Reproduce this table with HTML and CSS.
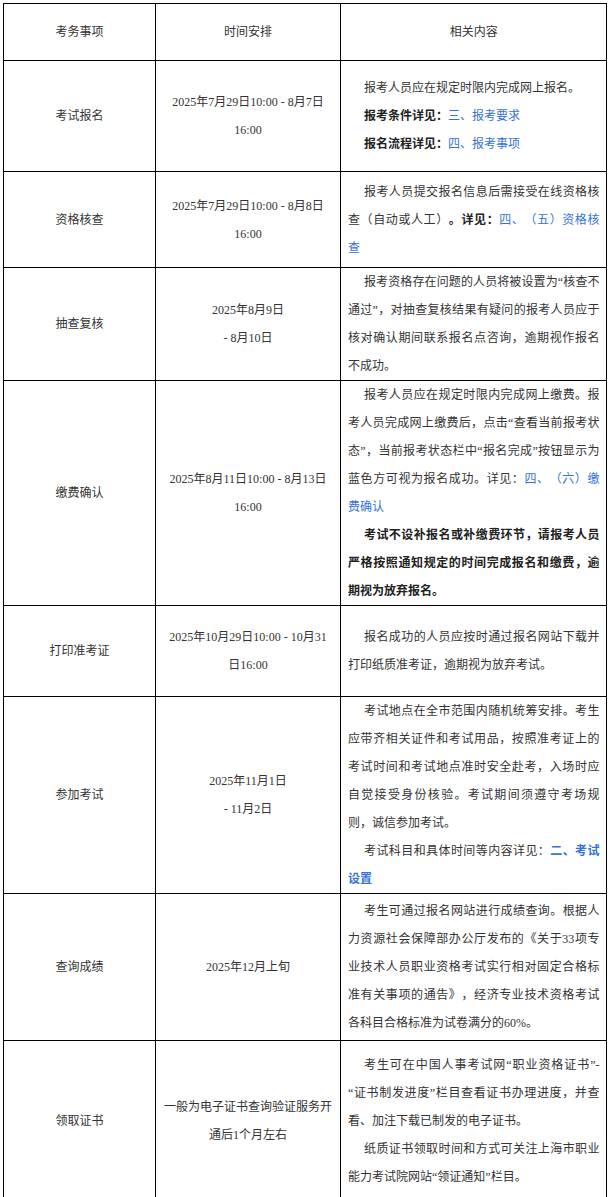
FILE: index.html
```html
<!DOCTYPE html>
<html lang="zh-CN">
<head>
<meta charset="utf-8">
<title>考务日程安排</title>
<link rel="stylesheet" href="styles.css">
</head>
<body>
<table class="schedule">
  <tbody>
    <tr class="row-head">
      <td class="item">考务事项</td>
      <td class="time">时间安排</td>
      <td class="desc desc-head">相关内容</td>
    </tr>
    <tr class="row-1">
      <td class="item">考试报名</td>
      <td class="time">2025年7月29日10:00 - 8月7日16:00</td>
      <td class="desc">
        <p>报考人员应在规定时限内完成网上报名。</p>
        <p><strong>报考条件详见：</strong><a class="link">三、报考要求</a></p>
        <p><strong>报名流程详见：</strong><a class="link">四、报考事项</a></p>
      </td>
    </tr>
    <tr class="row-2">
      <td class="item">资格核查</td>
      <td class="time">2025年7月29日10:00 - 8月8日16:00</td>
      <td class="desc">
        <p>报考人员提交报名信息后需接受在线资格核查（自动或人工）<strong>。详见：</strong><a class="link">四、（五）资格核查</a></p>
      </td>
    </tr>
    <tr class="row-3">
      <td class="item">抽查复核</td>
      <td class="time">2025年8月9日<br>- 8月10日</td>
      <td class="desc">
        <p>报考资格存在问题的人员将被设置为“核查不通过”，对抽查复核结果有疑问的报考人员应于核对确认期间联系报名点咨询，逾期视作报名不成功。</p>
      </td>
    </tr>
    <tr class="row-4">
      <td class="item">缴费确认</td>
      <td class="time">2025年8月11日10:00 - 8月13日16:00</td>
      <td class="desc">
        <p>报考人员应在规定时限内完成网上缴费。报考人员完成网上缴费后，点击“查看当前报考状态”，当前报考状态栏中“报名完成”按钮显示为蓝色方可视为报名成功。详见：<a class="link">四、（六）缴费确认</a></p>
        <p><strong>考试不设补报名或补缴费环节，请报考人员严格按照通知规定的时间完成报名和缴费，逾期视为放弃报名。</strong></p>
      </td>
    </tr>
    <tr class="row-5">
      <td class="item">打印准考证</td>
      <td class="time">2025年10月29日10:00 - 10月31日16:00</td>
      <td class="desc">
        <p>报名成功的人员应按时通过报名网站下载并打印纸质准考证，逾期视为放弃考试。</p>
      </td>
    </tr>
    <tr class="row-6">
      <td class="item">参加考试</td>
      <td class="time">2025年11月1日<br>- 11月2日</td>
      <td class="desc">
        <p>考试地点在全市范围内随机统筹安排。考生应带齐相关证件和考试用品，按照准考证上的考试时间和考试地点准时安全赴考，入场时应自觉接受身份核验。考试期间须遵守考场规则，诚信参加考试。</p>
        <p>考试科目和具体时间等内容详见：<a class="link link-bold">二、考试设置</a></p>
      </td>
    </tr>
    <tr class="row-7">
      <td class="item">查询成绩</td>
      <td class="time">2025年12月上旬</td>
      <td class="desc">
        <p>考生可通过报名网站进行成绩查询。根据人力资源社会保障部办公厅发布的《关于33项专业技术人员职业资格考试实行相对固定合格标准有关事项的通告》，经济专业技术资格考试各科目合格标准为试卷满分的60%。</p>
      </td>
    </tr>
    <tr class="row-8">
      <td class="item">领取证书</td>
      <td class="time">一般为电子证书查询验证服务开通后1个月左右</td>
      <td class="desc">
        <p>考生可在中国人事考试网“职业资格证书”-“证书制发进度”栏目查看证书办理进度，并查看、加注下载已制发的电子证书。</p>
        <p>纸质证书领取时间和方式可关注上海市职业能力考试院网站“领证通知”栏目。</p>
      </td>
    </tr>
  </tbody>
</table>
</body>
</html>
```
FILE: styles.css
```css
html, body {
  margin: 0;
  padding: 0;
  background: #ffffff;
}

body {
  font-family: "Liberation Serif", "Noto Sans CJK SC", sans-serif;
  font-size: 12px;
  line-height: 28px;
  color: #333333;
  text-spacing-trim: space-all;
}

.schedule {
  margin: 3px 0 0 3px;
  width: 604px;
  table-layout: fixed;
  border-collapse: separate;
  border-spacing: 0;
  border-top: 1px solid #000000;
  border-left: 1px solid #000000;
}

.schedule td {
  box-sizing: border-box;
  border-right: 1px solid #000000;
  border-bottom: 1px solid #000000;
  vertical-align: middle;
  padding-top: 0;
  padding-bottom: 0;
}

.item {
  width: 152px;
  padding: 0 4px;
  text-align: center;
}

.time {
  width: 185px;
  padding: 0 7.75px;
  text-align: center;
}

.desc {
  width: 266px;
  padding: 0 6.5px 0 7px;
  text-align: justify;
}

.desc-head {
  text-align: center;
}

.desc p {
  margin: 0;
  text-indent: 16px;
}

.desc strong {
  font-weight: bold;
  color: #222222;
}

.link {
  color: #3572d6;
  text-decoration: none;
}

.link-bold {
  font-weight: bold;
}

.row-head td { height: 57px; }
.row-1 td { height: 111px; }
.row-2 td { height: 96px; }
.row-3 td { height: 113px; }
.row-4 td { height: 225px; }
.row-5 td { height: 91px; }
.row-6 td { height: 197px; }
.row-7 td { height: 147px; }
.row-8 td { height: 161px; }
```
